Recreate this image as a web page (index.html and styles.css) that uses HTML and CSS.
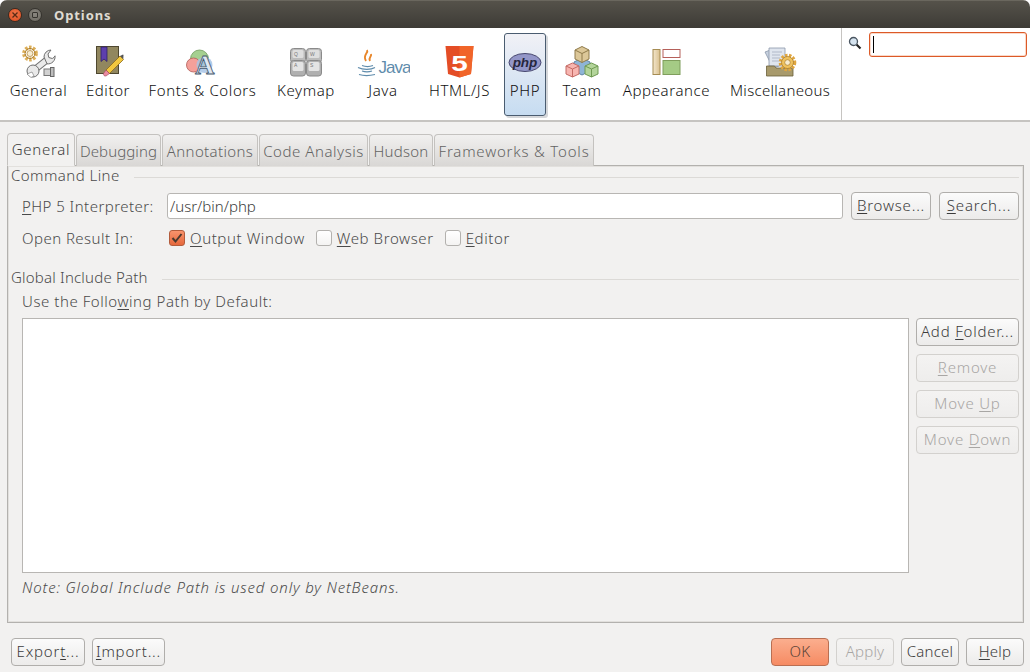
FILE: index.html
```html
<!DOCTYPE html>
<html lang="en">
<head>
<meta charset="utf-8">
<title>Options</title>
<link rel="stylesheet" href="styles.css">
</head>
<body>
<div class="window">
  <header class="titlebar">
    <span class="wbtn close"><svg width="8" height="8" viewBox="0 0 8 8"><path d="M1.5 1.5l5 5M6.500 1.500l-5 5" stroke="#5a2a14" stroke-width="1.300"/></svg></span>
    <span class="wbtn max"><span class="maxglyph"></span></span>
    <span class="wtitle">Options</span>
  </header>

  <div class="toolbar">
    <nav class="cats">
      <div class="cat">
        <svg width="38" height="36" viewBox="20 44 38 36">
          <circle cx="30" cy="53.500" r="6" fill="none" stroke="#dcae58" stroke-width="3.800" stroke-dasharray="2.400 1.400"/>
          <circle cx="30" cy="53.500" r="5" fill="none" stroke="#a97c2c" stroke-width="1"/>
          <circle cx="30" cy="53.500" r="3" fill="#f7ecd2" stroke="#a97c2c" stroke-width=".7"/>
          <path d="M33 71L48 59" stroke="#6f6f6f" stroke-width="7"/>
          <path d="M33 71L48 59" stroke="#e9e9e9" stroke-width="5"/>
          <path d="M44 57a7 7 0 0 1 7-7l-3 4 .8 3.500 3.500 1 1.800-1.200 .9-1.500a7 7 0 0 1-8 8z" fill="#e9e9e9" stroke="#6f6f6f"/>
          <circle cx="33" cy="71" r="6" fill="#e9e9e9" stroke="#6f6f6f"/>
          <path d="M27 74l5-2 2 4-3 1.500z" fill="#fff" stroke="#6f6f6f" stroke-width=".6"/>
          <rect x="44" y="69" width="6.500" height="6.500" fill="#d2d2d2" stroke="#777"/>
          <rect x="50.500" y="67.500" width="3.500" height="9" fill="#bdbdbd" stroke="#666"/>
        </svg>
        <span class="catlabel">General</span>
      </div>
      <div class="cat">
        <svg width="38" height="36" viewBox="89 44 38 36">
          <rect x="96.500" y="46.500" width="22" height="27" fill="#91875f" stroke="#4f4830"/>
          <path d="M101 47h6v14.500l-3-2.500-3 2.500z" fill="#5d3fae" stroke="#2f2268" stroke-width=".8"/>
          <path d="M106 70l14-14 3.500 3.500-14 14z" fill="#f2c83f" stroke="#8a6a1a" stroke-width=".8"/>
          <path d="M120 56l3-1.500 .5.500-.2 4z" fill="#555"/>
          <path d="M106 70l3.500 3.500-3.500 2.500a2 2 0 0 1-2.500-2.500z" fill="#e98aa0" stroke="#a04a5a" stroke-width=".6"/>
        </svg>
        <span class="catlabel">Editor</span>
      </div>
      <div class="cat">
        <svg width="38" height="36" viewBox="183.500 44 38 36">
          <circle cx="199" cy="59" r="9" fill="#a5d090" stroke="#6f9a5a" stroke-width=".8"/>
          <circle cx="193" cy="65" r="7" fill="#f4a09a" stroke="#b35c55" stroke-width=".8"/>
          <circle cx="204" cy="65" r="8" fill="#a8c4e6" opacity=".85"/>
          <text class="icontext fontsA" x="194.500" y="74">A</text>
        </svg>
        <span class="catlabel">Fonts &amp; Colors</span>
      </div>
      <div class="cat">
        <svg width="38" height="36" viewBox="287 44 38 36">
          <rect x="290.500" y="48.500" width="15" height="14" rx="3" fill="#bcbcbc" stroke="#8a8a8a"/>
          <rect x="306.500" y="48.500" width="15" height="14" rx="3" fill="#bcbcbc" stroke="#8a8a8a"/>
          <rect x="290.500" y="60.500" width="15" height="15.500" rx="3" fill="#b0b0b0" stroke="#8a8a8a"/>
          <rect x="306.500" y="60.500" width="15" height="15.500" rx="3" fill="#b0b0b0" stroke="#8a8a8a"/>
          <rect x="292.500" y="50" width="11" height="8" rx="1.500" fill="#dedede"/>
          <rect x="308.500" y="50" width="11" height="8" rx="1.500" fill="#dedede"/>
          <rect x="292.500" y="62" width="11" height="9" rx="1.500" fill="#e4e4e4"/>
          <rect x="308.500" y="62" width="11" height="9" rx="1.500" fill="#e4e4e4"/>
          <text class="icontext keycap" x="294" y="55.500">Q</text>
          <text class="icontext keycap" x="310" y="55.500">W</text>
          <text class="icontext keycap" x="294" y="67">A</text>
          <text class="icontext keycap" x="310" y="67">S</text>
        </svg>
        <span class="catlabel">Keymap</span>
      </div>
      <div class="cat">
        <svg width="54" height="36" viewBox="356 44 54 36">
          <path d="M367 50c2 3-5 5-1 11M371 54c1 3-3 3-1 7" fill="none" stroke="#e8862a" stroke-width="1.900"/>
          <path d="M362 65.500c3 1.200 8 1.200 11 0M358 67.500c5 2.500 13 2.500 17 0M362 71c3 1 7 1 10 0M359 74.500c4 1.200 11 1.200 16 0" fill="none" stroke="#5f8cac" stroke-width="1.200"/>
          <text class="icontext javatext" x="378.500" y="73">Java</text>
        </svg>
        <span class="catlabel">Java</span>
      </div>
      <div class="cat">
        <svg width="38" height="36" viewBox="440.500 44 38 36">
          <path d="M445 46h28l-2.500 28-11.500 3.500L447.500 74z" fill="#e44d26"/>
          <path d="M459 46h14l-2.500 28-11.500 3.500z" fill="#f16529"/>
          <text class="icontext html5" transform="translate(459 70.500) scale(1.350 1)">5</text>
        </svg>
        <span class="catlabel">HTML/JS</span>
      </div>
      <div class="cat active">
        <svg width="38" height="36" viewBox="506 44 38 36">
          <ellipse cx="525" cy="62.500" rx="16" ry="9" fill="#9396c8" stroke="#46466e"/>
          <text class="icontext phptext" x="525" y="67">php</text>
        </svg>
        <span class="catlabel">PHP</span>
      </div>
      <div class="cat">
        <svg width="38" height="36" viewBox="563 44 38 36">
          <path d="M574 62l8-4 8 4v9l-8 4-8-4z" fill="#8eb4d6" stroke="#5f85a8"/>
          <path d="M575 50l7-3.500 7 3.500v9l-7 3.500-7-3.500z" fill="#dcc798" stroke="#8f7a4a"/>
          <path d="M575 50l7 3.500 7-3.500M582 53.500v9" fill="none" stroke="#8f7a4a"/>
          <path d="M566 66l6.500-3 6.500 3v8l-6.500 3-6.500-3z" fill="#f7b5b0" stroke="#c46a64"/>
          <path d="M566 66l6.500 3 6.500-3M572.500 69v8" fill="none" stroke="#c46a64"/>
          <path d="M585 66l6.500-3 6.500 3v8l-6.500 3-6.500-3z" fill="#b3d49a" stroke="#6f9a52"/>
          <path d="M585 66l6.500 3 6.500-3M591.500 69v8" fill="none" stroke="#6f9a52"/>
        </svg>
        <span class="catlabel">Team</span>
      </div>
      <div class="cat">
        <svg width="38" height="36" viewBox="647.500 44 38 36">
          <defs>
            <linearGradient id="apbar" x1="0" x2="1" y1="0" y2="0"><stop offset="0" stop-color="#f3e6cc"/><stop offset="1" stop-color="#d9c08e"/></linearGradient>
          </defs>
          <rect x="652.500" y="49.500" width="7" height="25" fill="url(#apbar)" stroke="#a68c52"/>
          <rect x="662.500" y="49.500" width="17" height="8" fill="#fff" stroke="#b5605a"/>
          <rect x="662.500" y="60.500" width="17" height="14" fill="#a5cb85" stroke="#7f9e5c"/>
        </svg>
        <span class="catlabel">Appearance</span>
      </div>
      <div class="cat">
        <svg width="38" height="36" viewBox="761 44 38 36">
          <path d="M765 52l8-3 6 17-6 2z" fill="#c6d0de" stroke="#8a97aa" stroke-width=".8"/>
          <path d="M769 48h16v18h-16z" fill="#dfe5ee" stroke="#8a97aa" stroke-width=".8"/>
          <path d="M772 52h10M772 55h8M772 58h8M772 61h7" stroke="#a5afbf" stroke-width=".8"/>
          <path d="M766.500 66h8l1.500 2h17v8h-26.500z" fill="#a89a6c" stroke="#6b5f3a" stroke-width=".8"/>
          <circle cx="787.500" cy="62.500" r="7" fill="none" stroke="#e0a63f" stroke-width="3.600" stroke-dasharray="2.400 1.400"/>
          <circle cx="787.500" cy="62.500" r="6" fill="#efc25f" stroke="#a97c2c" stroke-width=".8"/>
          <circle cx="787.500" cy="62.500" r="2.800" fill="#f8ecd0" stroke="#a97c2c" stroke-width=".7"/>
        </svg>
        <span class="catlabel plain">Miscellaneous</span>
      </div>
    </nav>
    <div class="searchpane">
      <svg width="14" height="14" viewBox="0 0 14 14"><path d="M8.500 8.500l4 4" stroke="#222" stroke-width="2.200"/><circle cx="5.500" cy="5.500" r="4" fill="#d5e3ef" stroke="#4a5560" stroke-width="1.300"/></svg>
      <div class="searchbox"><span class="caret"></span></div>
    </div>
  </div>

  <main class="content">
    <div class="tabs">
      <span class="tab current">General</span>
      <span class="tab w-debug">Debugging</span>
      <span class="tab w-annot">Annotations</span>
      <span class="tab w-code">Code Analysis</span>
      <span class="tab w-hudson">Hudson</span>
      <span class="tab w-frame">Frameworks &amp; Tools</span>
    </div>
    <section class="panel">
      <div class="legend"><span>Command Line</span><i class="rule"></i></div>
      <div class="row interp">
        <label class="lab"><u>P</u>HP 5 Interpreter:</label>
        <div class="field">/usr/bin/php</div>
        <button class="btn bw"><u>B</u>rowse...</button>
        <button class="btn bw"><u>S</u>earch...</button>
      </div>
      <div class="row result">
        <label class="lab">Open Result In:</label>
        <span class="check on"><svg width="12" height="12" viewBox="0 0 12 12"><path d="M1.500 6l3 3.500L10.500 2" fill="none" stroke="#4a3a30" stroke-width="2"/></svg></span>
        <span class="opt"><u>O</u>utput Window</span>
        <span class="check"></span>
        <span class="opt"><u>W</u>eb Browser</span>
        <span class="check"></span>
        <span class="opt"><u>E</u>ditor</span>
      </div>
      <div class="legend second"><span>Global Include Path</span><i class="rule"></i></div>
      <div class="uselabel">Use the Follo<u>w</u>ing Path by Default:</div>
      <div class="pathrow">
        <div class="pathlist"></div>
        <div class="pathbtns">
          <button class="btn">Add <u>F</u>older...</button>
          <button class="btn off"><u>R</u>emove</button>
          <button class="btn off">Move <u>U</u>p</button>
          <button class="btn off">Move <u>D</u>own</button>
        </div>
      </div>
      <div class="note">Note: Global Include Path is used only by NetBeans.</div>
    </section>
    <footer class="actions">
      <button class="btn w74">Expor<u>t</u>...</button>
      <button class="btn w73"><u>I</u>mport...</button>
      <span class="spacer"></span>
      <button class="btn w58 ok">OK</button>
      <button class="btn w58 off">Apply</button>
      <button class="btn w58">Cancel</button>
      <button class="btn w58"><u>H</u>elp</button>
    </footer>
  </main>
</div>
</body>
</html>
```

FILE: styles.css
```css
* { box-sizing: border-box; }
html, body { margin: 0; padding: 0; background: #fff; }
body { width: 1030px; height: 672px; overflow: hidden; font-family: "Noto Sans", sans-serif; font-weight: 300; font-size: 14px; color: #3c3c3c; }
u { text-underline-offset: 2px; text-decoration-thickness: 1px; }

.window { width: 1030px; height: 672px; display: flex; flex-direction: column; background: #f2f1f0; border-radius: 7px 7px 0 0; overflow: hidden; }

.titlebar { height: 28px; flex: none; display: flex; align-items: center; padding-left: 8px; background: linear-gradient(#55524a, #3d3b36); border-top: 1px solid #6a675e; }
.wbtn { width: 14px; height: 14px; border-radius: 50%; display: flex; align-items: center; justify-content: center; margin-right: 6px; }
.close { background: radial-gradient(circle at 50% 40%, #f2784c, #dc4a1c); border: 1px solid #3b2a20; }
.max { background: radial-gradient(circle at 50% 40%, #8a8780, #6a675f); border: 1px solid #35332e; }
.maxglyph { width: 6px; height: 6px; border: 1px solid #36342f; border-radius: 1px; }
.wtitle { margin-left: 6px; font-weight: 700; font-size: 13px; color: #dfdbd2; letter-spacing: .9px; }

.toolbar { height: 94px; flex: none; display: flex; background: #fff; border-bottom: 2px solid #c6c4c1; }
.cats { width: 842px; flex: none; display: grid; grid-template-columns: 67px 52px 117px 70px 64px 69px 42px 52px 97px 110px; column-gap: 10px; padding: 5px 0 0 5px; border-right: 1px solid #c6c4c1; align-items: start; }
.cat { height: 83px; padding-top: 11px; display: flex; flex-direction: column; align-items: center; border-radius: 3px; }
.cat svg { flex: none; display: block; }
.catlabel { font-size: 15px; line-height: 20px; color: #111; white-space: nowrap; letter-spacing: .6px; }
.catlabel.plain { letter-spacing: .3px; }
.cat.active { background: linear-gradient(#f1f1f6, #c6dcf1); border: 1px solid #4a5c70; box-shadow: 2px 2px 0 #d5d7da; padding-top: 10px; }
.searchpane { flex: 1; display: flex; align-items: flex-start; padding: 4px 3px 0 6px; gap: 7px; }
.searchpane svg { margin-top: 4px; flex: none; }
.searchbox { width: 158px; height: 25px; background: #fff; border: 1px solid #dc5a28; border-radius: 3px; box-shadow: inset 0 0 0 1px #fbd9c9; padding: 3px 0 0 3px; }
.caret { display: block; width: 1px; height: 17px; background: #000; }

.icontext { font-family: "Liberation Sans", sans-serif; }
.fontsA { font-family: "Liberation Serif", serif; font-size: 27px; font-weight: 700; fill: #dfe8f2; stroke: #46586e; stroke-width: .8px; }
.keycap { font-size: 5px; fill: #777; }
.javatext { font-size: 17px; fill: #5f8cac; letter-spacing: -1px; font-weight: 400; }
.html5 { font-size: 22px; font-weight: 700; fill: #fff; text-anchor: middle; }
.phptext { font-size: 13.500px; font-weight: 700; font-style: italic; fill: #26263e; text-anchor: middle; }

.content { flex: 1; display: flex; flex-direction: column; padding: 11px 6px 6px 7px; min-height: 0; }
.tabs { height: 33px; flex: none; display: flex; align-items: flex-end; position: relative; z-index: 1; margin-bottom: -1px; gap: 1px; }
.tab { height: 32px; width: 85px; font-size: 15px; display: flex; align-items: center; justify-content: center; padding-top: 1px; color: #636363; background: linear-gradient(#f1f0ef, #d9d7d5); border: 1px solid #c4c2bf; border-bottom: 0; border-radius: 4px 4px 0 0; white-space: nowrap; letter-spacing: .1px; }
.tab.current { height: 33px; width: 68px; color: #3c3c3c; background: #f2f1f0; padding-top: 0; padding-bottom: 1px; border-bottom: 1px solid #f2f1f0; letter-spacing: .7px; }
.w-debug { width: 85px; }
.w-annot { width: 96px; letter-spacing: .35px; }
.w-code { width: 109px; letter-spacing: .55px; }
.w-hudson { width: 64px; letter-spacing: .25px; }
.w-frame { width: 160px; letter-spacing: .8px; }

.panel { flex: 1; min-height: 0; display: flex; flex-direction: column; border: 1px solid #b3b1ae; box-shadow: inset 0 0 0 1px #e2e0dd; padding: 0 4px 0 3px; }
.legend { height: 18px; flex: none; display: flex; align-items: center; gap: 14px; white-space: nowrap; font-size: 15px; color: #4a4a4a; letter-spacing: .45px; }
.legend.second { letter-spacing: .2px; }
.rule { flex: 1; height: 1px; background: #dcdad7; margin-top: 4px; display: block; }
.row { display: flex; align-items: center; white-space: nowrap; font-size: 15px; color: #4a4a4a; letter-spacing: .45px; }
.lab { padding-left: 11px; display: block; }
.interp { height: 28px; margin-top: 8px; }
.interp .lab { width: 156px; }
.field { width: 676px; height: 26px; margin-right: 8px; background: #fff; border: 1px solid #b8b6b3; border-radius: 3px; padding-left: 2px; line-height: 24px; color: #3c3c3c; letter-spacing: 0; }
.bw { width: 80px; }
.interp .bw + .bw { margin-left: 8px; }
.result { height: 20px; margin-top: 8px; }
.result .lab { width: 158px; }
.check { width: 16px; height: 16px; flex: none; display: flex; align-items: center; justify-content: center; background: linear-gradient(#fff, #f4f3f2); border: 1px solid #b3b1ae; border-radius: 3px; margin-right: 5px; }
.check.on { background: linear-gradient(#f9936d, #e5683c); border-color: #b35c3c; }
.opt { margin-right: 11px; letter-spacing: .6px; }
.second { margin-top: 20px; }
.uselabel { margin: 5px 0 0 11px; height: 20px; line-height: 20px; font-size: 15px; color: #4a4a4a; letter-spacing: .55px; }
.pathrow { display: flex; margin-top: 7px; margin-left: 11px; gap: 7px; }
.pathlist { width: 887px; height: 255px; background: #fff; border: 1px solid #b8b6b3; }
.pathbtns { width: 103px; display: flex; flex-direction: column; gap: 8px; }
.note { margin: 4px 0 0 11px; height: 20px; line-height: 20px; font-size: 15px; font-style: italic; color: #4a4a4a; letter-spacing: .84px; }

.btn { height: 28px; padding: 0 0 2px; font-family: inherit; font-weight: 300; font-size: 15px; letter-spacing: .8px; color: #3c3c3c; background: linear-gradient(#fbfbfb, #ecebea); border: 1px solid #b0aeab; border-radius: 4px; white-space: nowrap; }
.btn.off { color: #a8a6a4; background: linear-gradient(#f4f3f2, #eeedec); border-color: #d3d1ce; }
.btn.ok { background: linear-gradient(#fbae8e, #f68b63); border-color: #b96f52; color: #5a4438; }

.actions { height: 28px; flex: none; display: flex; margin-top: 15px; margin-left: 4px; gap: 7px; }
.spacer { flex: 1; }
.w74 { width: 74px; }
.w73 { width: 73px; }
.btn.w58 { width: 58px; letter-spacing: .2px; }
```
